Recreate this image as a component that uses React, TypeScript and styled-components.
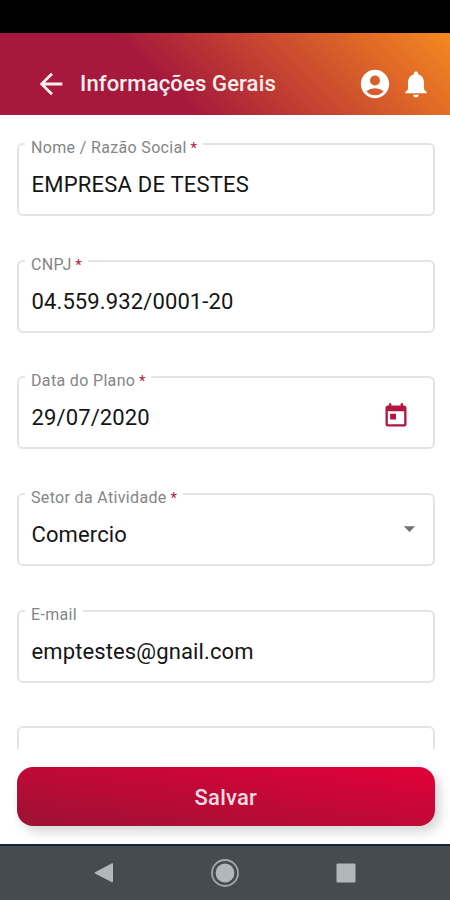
import React from "react";
import styled, { createGlobalStyle } from "styled-components";
import { MdAccountCircle, MdArrowBack, MdArrowDropDown, MdNotifications, MdToday } from "react-icons/md";

const GlobalStyle = createGlobalStyle`
  * { box-sizing: border-box; }
  body { margin: 0; background: #fff; font-family: Roboto, sans-serif; }
`;

const Screen = styled.div`
  width: 450px;
  height: 900px;
  display: flex;
  flex-direction: column;
  overflow: hidden;
  background: #fff;
`;

const StatusBar = styled.div`
  flex: none;
  height: 33px;
  background: #000;
`;

const Header = styled.header`
  flex: none;
  height: 82px;
  display: flex;
  align-items: center;
  padding: 21px 18px 0 34px;
  color: #fff;
  background: linear-gradient(45deg, #a6193c 37%, #f6881f 100%);
`;

const IconButton = styled.button<{ $size: number }>`
  flex: none;
  display: flex;
  padding: 0;
  border: 0;
  background: none;
  color: inherit;
  font-size: ${({ $size }) => $size}px;
`;

const BackButton = styled(IconButton)`
  margin-top: -1px;
  color: #fdeeee;
`;

const Title = styled.h1`
  flex: 1;
  margin: -2px 0 0 12px;
  font-size: 22px;
  font-weight: 500;
  line-height: 28px;
  letter-spacing: 0.16px;
  color: #fdeeee;
  white-space: nowrap;
`;

const Actions = styled.div`
  display: flex;
  align-items: center;
  margin-top: -1px;
  gap: 8px;
`;

const Form = styled.main`
  flex: none;
  height: 634px;
  display: flex;
  flex-direction: column;
  gap: 43.7px;
  padding: 28px 15px 0 16.5px;
  overflow: hidden;
`;

const FieldBox = styled.div`
  position: relative;
  flex: none;
  height: 73px;
  display: flex;
  align-items: center;
  justify-content: space-between;
  padding: 11px 23px 0 13px;
  border: 2px solid #e4e4e4;
  border-radius: 6px;
`;

const Label = styled.label`
  position: absolute;
  top: -6px;
  left: 6.5px;
  padding: 0 6px;
  background: #fff;
  font-size: 16px;
  line-height: 18px;
  color: #858585;
  white-space: nowrap;
`;

const LabelText = styled.span`
  letter-spacing: 0.34px;
`;

const Required = styled.span`
  font-size: 15px;
  color: #b3173f;
`;

const Value = styled.span<{ $spacing: number }>`
  font-size: 22px;
  line-height: 28px;
  letter-spacing: ${({ $spacing }) => $spacing}px;
  color: #151515;
  white-space: nowrap;
`;

const CalendarIcon = styled.span`
  display: flex;
  margin-top: -5px;
  color: #b3173f;
  font-size: 28px;
`;

const DropdownIcon = styled.span`
  display: flex;
  margin: -13px -13px 0 0;
  color: #707070;
  font-size: 27px;
`;

const Footer = styled.footer`
  flex: none;
  height: 95px;
  padding: 18px 15.5px 0 17px;
`;

const SaveButton = styled.button`
  display: block;
  width: 100%;
  height: 59px;
  padding: 2px 0 0;
  border: 0;
  border-radius: 16px;
  background: linear-gradient(to top right, #9c1233 0%, #e2003a 100%);
  box-shadow: 5px 6px 12px rgba(0, 0, 0, 0.16);
  color: #f8dbe1;
  font: 500 22px/57px Roboto, sans-serif;
  letter-spacing: 0.2px;
`;

const NavigationBar = styled.nav`
  flex: none;
  height: 56px;
  display: flex;
  align-items: center;
  justify-content: space-between;
  padding: 0 94px;
  background: #444c51;
  border-top: 2px solid #142630;
`;

type FieldProps = {
  label?: string;
  value?: string;
  required?: boolean;
  valueSpacing?: number;
  children?: React.ReactNode;
};

function Field({ label, value, required, valueSpacing = 0.12, children }: FieldProps) {
  return (
    <FieldBox>
      {label && (
        <Label>
          <LabelText>{label}</LabelText>
          {required && <Required> *</Required>}
        </Label>
      )}
      {value && <Value $spacing={valueSpacing}>{value}</Value>}
      {children}
    </FieldBox>
  );
}

export default function App() {
  return (
    <>
      <GlobalStyle />
      <Screen>
        <StatusBar />
        <Header>
          <BackButton $size={34} aria-label="Voltar"><MdArrowBack /></BackButton>
          <Title>Informações Gerais</Title>
          <Actions>
            <IconButton $size={34} aria-label="Perfil"><MdAccountCircle /></IconButton>
            <IconButton $size={32} aria-label="Notificações"><MdNotifications /></IconButton>
          </Actions>
        </Header>
        <Form>
          <Field label="Nome / Razão Social" value="EMPRESA DE TESTES" valueSpacing={0.22} required />
          <Field label="CNPJ" value="04.559.932/0001-20" required />
          <Field label="Data do Plano" value="29/07/2020" required>
            <CalendarIcon><MdToday /></CalendarIcon>
          </Field>
          <Field label="Setor da Atividade" value="Comercio" required>
            <DropdownIcon><MdArrowDropDown /></DropdownIcon>
          </Field>
          <Field label="E-mail" value="emptestes@gnail.com" />
          <Field />
        </Form>
        <Footer>
          <SaveButton>Salvar</SaveButton>
        </Footer>
        <NavigationBar>
          <svg width="20" height="22" viewBox="0 0 20 22" fill="#b0b8ba"><path d="M1 10.2 17.5 1.4Q19 .7 19 2.2V19.2Q19 20.8 17.5 20L1 11.4Q0 10.8 1 10.2Z" /></svg>
          <svg width="28" height="28" viewBox="0 0 28 28"><circle cx="14" cy="14" r="13" fill="none" stroke="#a0a8aa" strokeWidth="1.8" /><circle cx="14" cy="14" r="9.4" fill="#b0b8ba" /></svg>
          <svg width="20" height="20" viewBox="0 0 20 20"><rect x=".5" y=".5" width="19" height="19" rx="1" fill="#b0b8ba" /></svg>
        </NavigationBar>
      </Screen>
    </>
  );
}
